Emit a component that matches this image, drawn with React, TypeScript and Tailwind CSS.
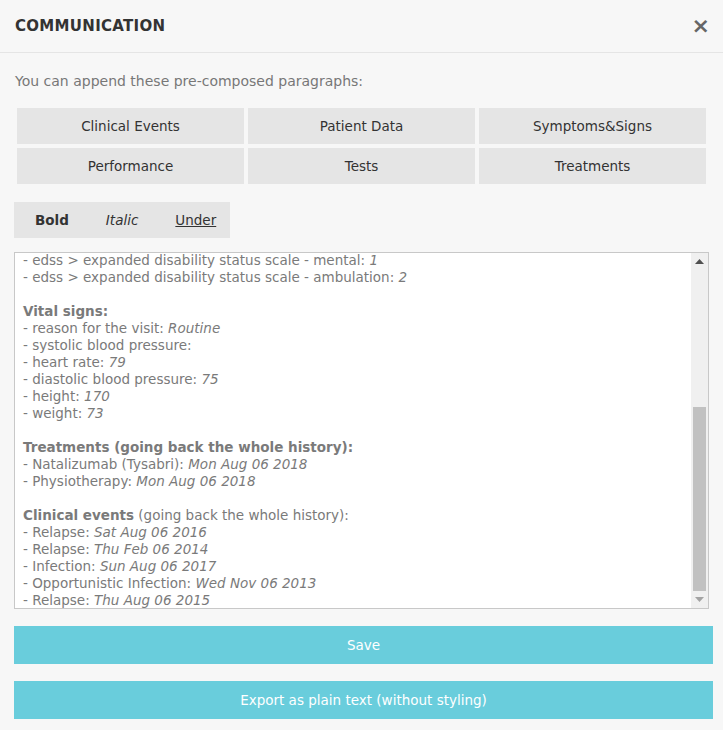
import React from "react";

const font = { fontFamily: '"DejaVu Sans", "Liberation Sans", sans-serif' };

const paragraphs = [
  ["Clinical Events", "Patient Data", "Symptoms&Signs"],
  ["Performance", "Tests", "Treatments"],
];

type Line = { label?: string; value?: string; head?: string; rest?: string; blank?: boolean };

const lines: Line[] = [
  { label: "- edss > expanded disability status scale - mental: ", value: "1" },
  { label: "- edss > expanded disability status scale - ambulation: ", value: "2" },
  { blank: true },
  { head: "Vital signs:" },
  { label: "- reason for the visit: ", value: "Routine" },
  { label: "- systolic blood pressure:" },
  { label: "- heart rate: ", value: "79" },
  { label: "- diastolic blood pressure: ", value: "75" },
  { label: "- height: ", value: "170" },
  { label: "- weight: ", value: "73" },
  { blank: true },
  { head: "Treatments (going back the whole history):" },
  { label: "- Natalizumab (Tysabri): ", value: "Mon Aug 06 2018" },
  { label: "- Physiotherapy: ", value: "Mon Aug 06 2018" },
  { blank: true },
  { head: "Clinical events", rest: " (going back the whole history):" },
  { label: "- Relapse: ", value: "Sat Aug 06 2016" },
  { label: "- Relapse: ", value: "Thu Feb 06 2014" },
  { label: "- Infection: ", value: "Sun Aug 06 2017" },
  { label: "- Opportunistic Infection: ", value: "Wed Nov 06 2013" },
  { label: "- Relapse: ", value: "Thu Aug 06 2015" },
];

export default function App() {
  return (
    <div className="w-[723px] h-[730px] bg-[#f7f7f7] text-[#333] overflow-hidden" style={font}>
      <div className="flex items-center justify-between h-[53px] px-[15px] border-b border-[#e5e5e5]">
        <h2 className="text-[15px] font-bold tracking-[0.3px] text-[#333]">COMMUNICATION</h2>
        <span className="text-[22px] font-bold text-[#666] leading-none mr-[-2px]">×</span>
      </div>

      <div className="px-[14px]">
        <p className="text-[14px] text-[#777] mt-[18px] mb-[16px] pl-[1px]">
          You can append these pre-composed paragraphs:
        </p>

        <div className="flex flex-col gap-[4px] px-[3px]">
          {paragraphs.map((row, i) => (
            <div key={i} className="grid grid-cols-3 gap-[4px]">
              {row.map((p) => (
                <button key={p} className="h-[36px] bg-[#e5e5e5] text-[13.5px] text-[#333]">
                  {p}
                </button>
              ))}
            </div>
          ))}
        </div>

        <div className="inline-flex items-center h-[36px] mt-[18px] bg-[#e5e5e5] text-[13.5px] text-[#333] pl-[21px] pr-[14px] gap-[37px]">
          <span className="font-bold">Bold</span>
          <span className="italic">Italic</span>
          <span className="underline">Under</span>
        </div>

        <div className="flex mt-[14px] h-[357px] bg-white border border-[#c8c8c8]">
          <div className="flex-1 overflow-hidden pl-[8px] text-[13.5px] leading-[17px] text-[#7a7a7a] -mt-[1px]">
            {lines.map((l, i) =>
              l.blank ? (
                <div key={i} className="h-[17px]" />
              ) : l.head ? (
                <div key={i} className="whitespace-nowrap">
                  <span className="font-bold">{l.head}</span>
                  {l.rest}
                </div>
              ) : (
                <div key={i} className="whitespace-nowrap">
                  {l.label}
                  {l.value && <span className="italic">{l.value}</span>}
                </div>
              )
            )}
          </div>
          <div className="w-[17px] bg-[#f0f0f0] flex flex-col items-center">
            <div className="h-[17px] flex items-center justify-center">
              <svg width="9" height="5" viewBox="0 0 9 5">
                <path d="M4.5 0 L9 5 L0 5 Z" fill="#505050" />
              </svg>
            </div>
            <div className="flex-1 w-full flex flex-col">
              <div className="h-[137px]" />
              <div className="mx-[2px] h-[184px] bg-[#c1c1c1]" />
            </div>
            <div className="h-[17px] flex items-center justify-center">
              <svg width="9" height="5" viewBox="0 0 9 5">
                <path d="M0 0 L9 0 L4.5 5 Z" fill="#a3a3a3" />
              </svg>
            </div>
          </div>
        </div>

        <button className="block w-[699px] h-[38px] mt-[17px] bg-[#69cddc] text-white text-[13.5px]">Save</button>
        <button className="block w-[699px] h-[38px] mt-[17px] bg-[#69cddc] text-white text-[13.5px]">
          Export as plain text (without styling)
        </button>
      </div>
    </div>
  );
}
